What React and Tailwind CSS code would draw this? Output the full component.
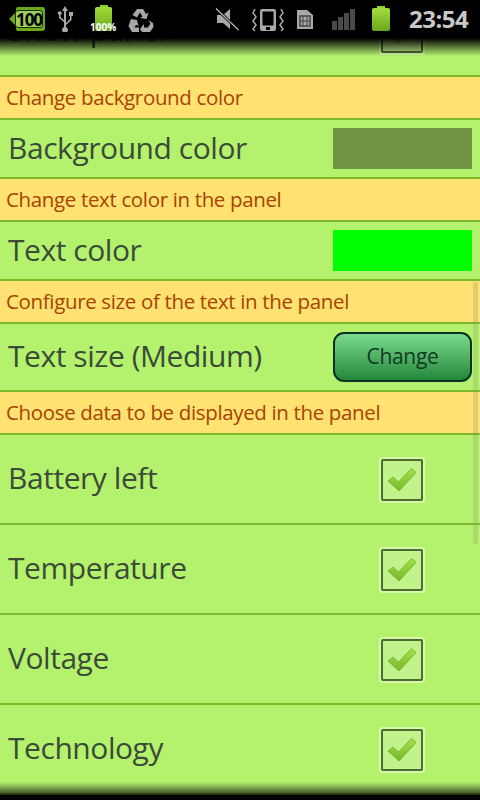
import React from 'react';

const FONT = "font-['Open_Sans','Noto_Sans',sans-serif]";

const Header = ({ children }) => (
  <div className="h-[43px] flex items-center pl-[6px] bg-[#ffe272] border-b-2 border-[#7fb82a] text-[20.5px] tracking-[-0.35px] text-[#a84300] whitespace-nowrap">
    {children}
  </div>
);

const Row = ({ label, height = 'h-[59px]', children }) => (
  <div className={`${height} flex items-center justify-between pl-2 pr-2 bg-[#b4f26e] border-b-2 border-[#7fb82a]`}>
    <span className="mb-[3px] text-[30px] tracking-[-0.45px] text-[#3c4a38] whitespace-nowrap">{label}</span>
    {children}
  </div>
);

const Check = () => (
  <div className="mr-[47px] mt-[1px] w-[46px] h-[46px] rounded-[3px] border-2 border-[#d4f9a8] flex items-center justify-center">
    <div className="w-[42px] h-[42px] rounded-[2px] border-[2px] border-[#4f6b30] bg-[#c2f28c] flex items-center justify-center">
      <svg width="30" height="26" viewBox="0 0 30 26">
        <defs>
          <linearGradient id="tick" x1="0" y1="0" x2="0" y2="1">
            <stop offset="0" stopColor="#a6e04e" />
            <stop offset="1" stopColor="#74b828" />
          </linearGradient>
        </defs>
        <path d="M1 14 L6 10 L11.500 15 L24.500 1.500 L29 5.500 L12 24 Z" fill="url(#tick)" stroke="#7cba30" strokeWidth="1" strokeLinejoin="round" />
      </svg>
    </div>
  </div>
);

const Swatch = ({ color }) => <div className={`w-[139px] h-[41px] ${color}`} />;

const StatusBar = () => (
  <div className="h-[38px] bg-black flex items-center relative shrink-0 z-10">
    <div className="absolute left-[9px] top-[7px] w-[36px] h-[24px]">
      <svg width="36" height="24" viewBox="0 0 36 24" className="absolute inset-0">
        <path d="M0 12 L7 5 L7 2 Q7 0 9 0 L33 0 Q36 0 36 3 L36 21 Q36 24 33 24 L9 24 Q7 24 7 22 L7 19 Z" fill="#6aa81c" />
      </svg>
      <span className="absolute left-[6px] top-[3px] w-[28px] h-[18px] bg-[#9ccc5a] border border-[#1a2a08] rounded-[3px] flex items-center justify-center text-[17px] font-bold text-black tracking-[-1px] leading-none">100</span>
    </div>
    <svg className="absolute left-[56px] top-[6px]" width="18" height="26" viewBox="0 0 18 26" fill="#a8a8a8">
      <path d="M9 0 L12 5 L10 5 L10 17 L14 13 L14 10 L13 10 L13 6 L17 6 L17 10 L15.500 10 L15.500 14 L10 19 L10 21 A3 3 0 1 1 8 21 L8 16 L3 12 L3 9 A2 2 0 1 1 4.500 9 L4.500 11 L8 14 L8 5 L6 5 Z" />
    </svg>
    <div className="absolute left-[95px] top-[5px] w-[17px] h-[26px]">
      <div className="mx-auto w-[8px] h-[2px] bg-[#8fd02a]" />
      <div className="h-[24px] rounded-[2px] bg-gradient-to-b from-[#a4dc3c] to-[#6aa81c]" />
    </div>
    <span className="absolute left-[90px] top-[21px] text-[10px] font-bold text-white leading-[12px]">100%</span>
    <svg className="absolute left-[128px] top-[8px]" width="26" height="24" viewBox="0 0 26 24" fill="#a8a8a8">
      <path d="M9 1 L15 1 L18 6 L20.500 4.500 L18.500 11 L12 10 L14.500 8.500 L12 4.500 L9 9.500 L4.500 7 Z" />
      <path d="M3 11 L9 12 L10.500 18 L8 16.800 L6.500 19.500 L11 19.500 L11 24 L4 24 L0.500 18 Z" />
      <path d="M20 12 L25 15 L25.500 19 L22 24 L16 24 L16 27 L12 21 L16 16 L16 19.500 L20 19.500 L22.500 15.500 Z" />
    </svg>
    <svg className="absolute left-[215px] top-[7px]" width="26" height="24" viewBox="0 0 26 24" fill="#a8a8a8">
      <path d="M2 8 L8 8 L15 2 L15 22 L8 16 L2 16 Z" />
      <path d="M1 0 L25 23 L23 24 L0 2 Z" stroke="#000" strokeWidth="1" />
    </svg>
    <svg className="absolute left-[252px] top-[8px]" width="32" height="24" viewBox="0 0 32 24">
      <rect x="8" y="1" width="16" height="22" rx="2" fill="#a8a8a8" />
      <rect x="10.500" y="3.500" width="11" height="14" fill="#000" />
      <rect x="14" y="19" width="4" height="3" fill="#000" />
      <path d="M3 1 L1 5 L4 9 L1 13 L4 17 L1 21 L3 23 M29 1 L31 5 L28 9 L31 13 L28 17 L31 21 L29 23" fill="none" stroke="#a8a8a8" strokeWidth="1.500" />
    </svg>
    <svg className="absolute left-[297px] top-[9px]" width="16" height="21" viewBox="0 0 16 21">
      <path d="M0 1 L10 1 L16 6 L16 20 L0 20 Z" fill="#a8a8a8" />
      <rect x="3" y="7" width="10" height="10" fill="none" stroke="#444" strokeWidth="1.500" />
      <path d="M6 7 V17 M10 7 V17 M3 12 H13" stroke="#444" strokeWidth="1" />
    </svg>
    <div className="absolute left-[332px] top-[9px] flex items-end gap-[1px] h-[21px]">
      <div className="w-[5px] h-[9px] bg-[#4a4a4a]" />
      <div className="w-[5px] h-[13px] bg-[#4a4a4a]" />
      <div className="w-[5px] h-[17px] bg-[#4a4a4a]" />
      <div className="w-[5px] h-[21px] bg-[#4a4a4a]" />
    </div>
    <div className="absolute left-[372px] top-[6px] w-[18px] h-[25px]">
      <div className="mx-auto w-[8px] h-[2px] bg-[#8fd02a]" />
      <div className="h-[23px] rounded-[2px] bg-gradient-to-b from-[#a4dc3c] to-[#6aa81c]" />
    </div>
    <span className="absolute left-[409px] top-[3px] text-[24px] font-bold tracking-[-0.5px] text-[#c8c8c8] leading-[32px]">23:54</span>
  </div>
);

export default function App() {
  return (
    <div className={`${FONT} relative w-[480px] h-[800px] overflow-hidden bg-black flex flex-col`}>
      <StatusBar />
      <div className="relative flex-1 overflow-hidden">
        <div className="-mt-[51px]">
          <Row label="Show panel" height="h-[90px]"><Check /></Row>
          <Header>Change background color</Header>
          <Row label="Background color">
            <Swatch color="bg-[#6f9445]" />
          </Row>
          <Header>Change text color in the panel</Header>
          <Row label="Text color">
            <Swatch color="bg-[#00ff00]" />
          </Row>
          <Header>Configure size of the text in the panel</Header>
          <Row label="Text size (Medium)" height="h-[68px]">
            <button type="button" className="w-[139px] h-[50px] rounded-[11px] border-2 border-[#0a3220] bg-gradient-to-b from-[#7adb8e] to-[#22883a] text-[21px] tracking-[-0.3px] text-[#0f3a22]">
              Change
            </button>
          </Row>
          <Header>Choose data to be displayed in the panel</Header>
          <Row label="Battery left" height="h-[90px]"><Check /></Row>
          <Row label="Temperature" height="h-[90px]"><Check /></Row>
          <Row label="Voltage" height="h-[90px]"><Check /></Row>
          <Row label="Technology" height="h-[90px]"><Check /></Row>
        </div>
        <div className="absolute top-0 left-0 right-0 h-[18px] bg-gradient-to-b from-black to-transparent" />
        <div className="absolute bottom-0 left-0 right-0 h-[18px] bg-gradient-to-t from-black to-transparent" />
        <div className="absolute right-[2px] top-[244px] w-[5px] h-[262px] rounded-[3px] bg-[#8a8a6a]/25" />
      </div>
    </div>
  );
}
